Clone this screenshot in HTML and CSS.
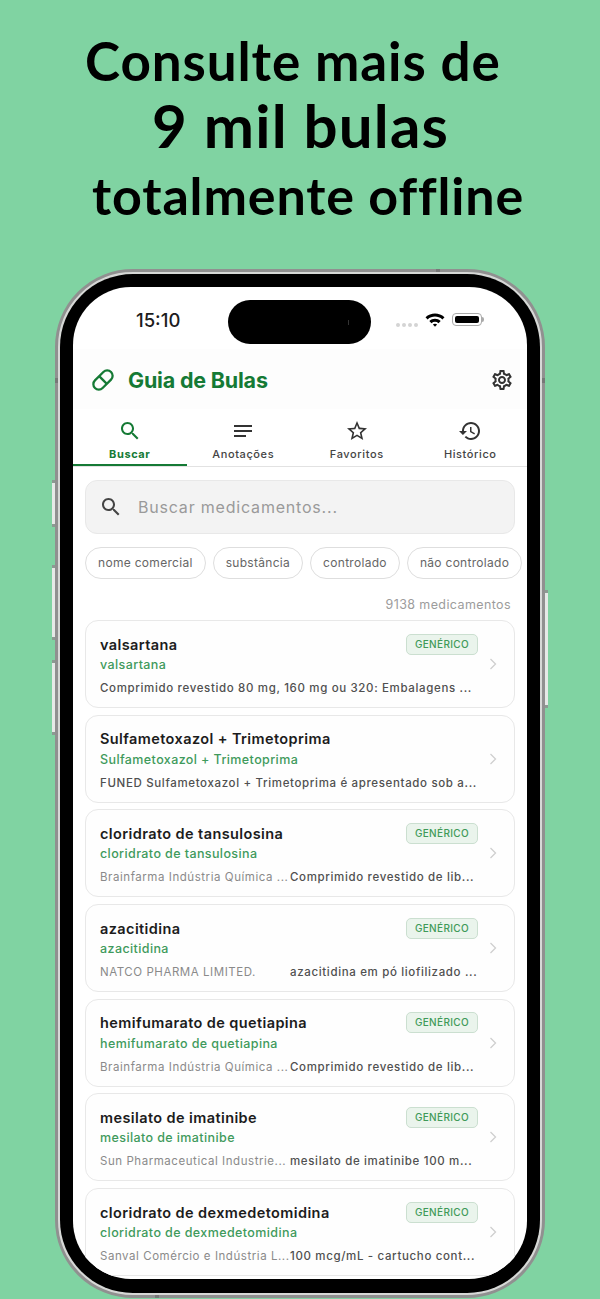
FILE: index.html
```html
<!DOCTYPE html>
<html lang="pt">
<head>
  <meta charset="UTF-8">
  <title>Guia de Bulas</title>
  <link rel="stylesheet" href="styles.css">
</head>
<body>
  <div class="headline">
    <p class="line-one">Consulte mais de</p>
    <p class="line-two">9 mil bulas</p>
    <p class="line-three">totalmente offline</p>
  </div>

  <div class="phone">
    <span class="side-btn mute"></span>
    <span class="side-btn vol-up"></span>
    <span class="side-btn vol-down"></span>
    <span class="side-btn power"></span>
    <span class="ant ant-top"></span>
    <span class="ant ant-bottom"></span>
    <span class="ant ant-left"></span>
    <span class="ant ant-right"></span>
    <div class="bezel">
      <div class="screen">
        <div class="island"><i></i></div>

        <div class="status">
          <span class="time">15:10</span>
          <div class="status-icons">
            <span class="signal"><i></i><i></i><i></i><i></i></span>
            <svg class="wifi" width="20" height="15" viewBox="0 0 20 15">
              <path d="M0.5 5.2C5.8 0.2 14.2 0.2 19.5 5.2L17.4 7.4C13.2 3.6 6.8 3.6 2.6 7.4Z" fill="#000"/>
              <path d="M4.3 9C7.6 6 12.4 6 15.7 9L13.5 11.2C11.4 9.4 8.6 9.4 6.5 11.2Z" fill="#000"/>
              <path d="M7.9 12.6C9.1 11.6 10.9 11.6 12.1 12.6L10 14.8Z" fill="#000"/>
            </svg>
            <span class="battery"><i></i></span>
          </div>
        </div>

        <header class="appbar">
          <div class="brand">
            <svg width="26" height="26" viewBox="0 0 24 24" fill="none" stroke="#157a35" stroke-width="2.1">
              <g transform="rotate(-45 12 12)">
                <rect x="1.5" y="7" width="21" height="10" rx="5"/>
                <path d="M12 7V17"/>
              </g>
            </svg>
            <h1>Guia de Bulas</h1>
          </div>
          <svg class="gear" width="24" height="24" viewBox="0 0 24 24" fill="#333">
            <path d="M19.43 12.98c.04-.32.07-.64.07-.98 0-.34-.03-.66-.07-.98l2.11-1.65c.19-.15.24-.42.12-.64l-2-3.46c-.09-.16-.26-.25-.44-.25-.06 0-.12.01-.17.03l-2.49 1c-.52-.4-1.08-.73-1.69-.98l-.38-2.65C14.46 2.18 14.25 2 14 2h-4c-.25 0-.46.18-.49.42l-.38 2.65c-.61.25-1.17.59-1.69.98l-2.49-1c-.06-.02-.12-.03-.18-.03-.17 0-.34.09-.43.25l-2 3.46c-.13.22-.07.49.12.64l2.11 1.65c-.04.32-.07.65-.07.98 0 .33.03.66.07.98l-2.11 1.65c-.19.15-.24.42-.12.64l2 3.46c.09.16.26.25.44.25.06 0 .12-.01.17-.03l2.49-1c.52.4 1.08.73 1.69.98l.38 2.65c.03.24.24.42.49.42h4c.25 0 .46-.18.49-.42l.38-2.65c.61-.25 1.17-.59 1.69-.98l2.49 1c.06.02.12.03.18.03.17 0 .34-.09.43-.25l2-3.46c.12-.22.07-.49-.12-.64l-2.11-1.65zm-1.98-1.71c.04.31.05.52.05.73 0 .21-.02.43-.05.73l-.14 1.13.89.7 1.08.84-.7 1.21-1.27-.51-1.04-.42-.9.68c-.43.32-.84.56-1.25.73l-1.06.43-.16 1.13-.2 1.35h-1.4l-.19-1.35-.16-1.13-1.06-.43c-.43-.18-.83-.41-1.23-.71l-.91-.7-1.06.43-1.27.51-.7-1.21 1.08-.84.89-.7-.14-1.13c-.03-.31-.05-.54-.05-.74s.02-.43.05-.73l.14-1.13-.89-.7-1.08-.84.7-1.21 1.27.51 1.04.42.9-.68c.43-.32.84-.56 1.25-.73l1.06-.43.16-1.13.2-1.35h1.39l.19 1.35.16 1.13 1.06.43c.43.18.83.41 1.23.71l.91.7 1.06-.43 1.27-.51.7 1.21-1.07.85-.89.7.14 1.13zM12 8c-2.21 0-4 1.79-4 4s1.79 4 4 4 4-1.79 4-4-1.79-4-4-4zm0 6c-1.1 0-2-.9-2-2s.9-2 2-2 2 .9 2 2-.9 2-2 2z"/>
          </svg>
        </header>

        <nav class="tabs">
          <a class="tab active">
            <svg width="24" height="24" viewBox="0 0 24 24" fill="#157a35"><path d="M15.5 14h-.79l-.28-.27C15.41 12.59 16 11.11 16 9.5 16 5.91 13.09 3 9.5 3S3 5.91 3 9.5 5.91 16 9.5 16c1.61 0 3.09-.59 4.23-1.57l.27.28v.79l5 4.99L20.49 19l-4.99-5zm-6 0C7.01 14 5 11.99 5 9.5S7.01 5 9.5 5 14 7.01 14 9.5 11.99 14 9.5 14z"/></svg>
            <span>Buscar</span>
          </a>
          <a class="tab">
            <svg width="24" height="24" viewBox="0 0 24 24" fill="#333"><path d="M3 18h12v-2H3v2zM3 6v2h18V6H3zm0 7h18v-2H3v2z"/></svg>
            <span>Anotações</span>
          </a>
          <a class="tab">
            <svg width="24" height="24" viewBox="0 0 24 24" fill="#333"><path d="M22 9.24l-7.19-.62L12 2 9.19 8.63 2 9.24l5.46 4.73L5.82 21 12 17.27 18.18 21l-1.63-7.03L22 9.24zM12 15.4l-3.76 2.27 1-4.28-3.32-2.88 4.38-.38L12 6.1l1.71 4.04 4.38.38-3.32 2.88 1 4.28L12 15.4z"/></svg>
            <span>Favoritos</span>
          </a>
          <a class="tab">
            <svg width="24" height="24" viewBox="0 0 24 24" fill="#333"><path d="M13 3c-4.97 0-9 4.03-9 9H1l3.89 3.89.07.14L9 12H6c0-3.87 3.13-7 7-7s7 3.13 7 7-3.13 7-7 7c-1.93 0-3.68-.79-4.94-2.06l-1.42 1.42C8.27 19.99 10.51 21 13 21c4.97 0 9-4.03 9-9s-4.03-9-9-9zm-1 5v5l4.28 2.54.72-1.21-3.5-2.08V8H12z"/></svg>
            <span>Histórico</span>
          </a>
        </nav>

        <div class="content">
          <div class="search">
            <svg width="24" height="24" viewBox="0 0 24 24" fill="#444"><path d="M15.5 14h-.79l-.28-.27C15.41 12.59 16 11.11 16 9.5 16 5.91 13.09 3 9.5 3S3 5.91 3 9.5 5.91 16 9.5 16c1.61 0 3.09-.59 4.23-1.57l.27.28v.79l5 4.99L20.49 19l-4.99-5zm-6 0C7.01 14 5 11.99 5 9.5S7.01 5 9.5 5 14 7.01 14 9.5 11.99 14 9.5 14z"/></svg>
            <span>Buscar medicamentos...</span>
          </div>

          <div class="chips">
            <span class="chip">nome comercial</span>
            <span class="chip">substância</span>
            <span class="chip">controlado</span>
            <span class="chip">não controlado</span>
          </div>

          <p class="count">9138 medicamentos</p>

          <div class="list">
            <article class="card">
              <div class="card-top"><h2>valsartana</h2><span class="badge">GENÉRICO</span></div>
              <p class="subst">valsartana</p>
              <div class="card-info"><span class="desc">Comprimido revestido 80 mg, 160 mg ou 320: Embalagens ...</span></div>
              <svg class="chev" width="8" height="12" viewBox="0 0 8 12" fill="none" stroke="#cfcfcf" stroke-width="1.3"><path d="M1.5 1L6.5 6L1.5 11"/></svg>
            </article>
            <article class="card">
              <div class="card-top"><h2>Sulfametoxazol + Trimetoprima</h2></div>
              <p class="subst">Sulfametoxazol + Trimetoprima</p>
              <div class="card-info"><span class="desc">FUNED Sulfametoxazol + Trimetoprima é apresentado sob a...</span></div>
              <svg class="chev" width="8" height="12" viewBox="0 0 8 12" fill="none" stroke="#cfcfcf" stroke-width="1.3"><path d="M1.5 1L6.5 6L1.5 11"/></svg>
            </article>
            <article class="card">
              <div class="card-top"><h2>cloridrato de tansulosina</h2><span class="badge">GENÉRICO</span></div>
              <p class="subst">cloridrato de tansulosina</p>
              <div class="card-info"><span class="lab">Brainfarma Indústria Química ...</span><span class="desc">Comprimido revestido de lib...</span></div>
              <svg class="chev" width="8" height="12" viewBox="0 0 8 12" fill="none" stroke="#cfcfcf" stroke-width="1.3"><path d="M1.5 1L6.5 6L1.5 11"/></svg>
            </article>
            <article class="card">
              <div class="card-top"><h2>azacitidina</h2><span class="badge">GENÉRICO</span></div>
              <p class="subst">azacitidina</p>
              <div class="card-info"><span class="lab">NATCO PHARMA LIMITED.</span><span class="desc">azacitidina em pó liofilizado ...</span></div>
              <svg class="chev" width="8" height="12" viewBox="0 0 8 12" fill="none" stroke="#cfcfcf" stroke-width="1.3"><path d="M1.5 1L6.5 6L1.5 11"/></svg>
            </article>
            <article class="card">
              <div class="card-top"><h2>hemifumarato de quetiapina</h2><span class="badge">GENÉRICO</span></div>
              <p class="subst">hemifumarato de quetiapina</p>
              <div class="card-info"><span class="lab">Brainfarma Indústria Química ...</span><span class="desc">Comprimido revestido de lib...</span></div>
              <svg class="chev" width="8" height="12" viewBox="0 0 8 12" fill="none" stroke="#cfcfcf" stroke-width="1.3"><path d="M1.5 1L6.5 6L1.5 11"/></svg>
            </article>
            <article class="card">
              <div class="card-top"><h2>mesilato de imatinibe</h2><span class="badge">GENÉRICO</span></div>
              <p class="subst">mesilato de imatinibe</p>
              <div class="card-info"><span class="lab">Sun Pharmaceutical Industrie...</span><span class="desc">mesilato de imatinibe 100 m...</span></div>
              <svg class="chev" width="8" height="12" viewBox="0 0 8 12" fill="none" stroke="#cfcfcf" stroke-width="1.3"><path d="M1.5 1L6.5 6L1.5 11"/></svg>
            </article>
            <article class="card">
              <div class="card-top"><h2>cloridrato de dexmedetomidina</h2><span class="badge">GENÉRICO</span></div>
              <p class="subst">cloridrato de dexmedetomidina</p>
              <div class="card-info"><span class="lab">Sanval Comércio e Indústria L...</span><span class="desc">100 mcg/mL - cartucho cont...</span></div>
              <svg class="chev" width="8" height="12" viewBox="0 0 8 12" fill="none" stroke="#cfcfcf" stroke-width="1.3"><path d="M1.5 1L6.5 6L1.5 11"/></svg>
            </article>
          </div>
        </div>
      </div>
    </div>
  </div>
</body>
</html>
```

FILE: styles.css
```css
html, body {
  margin: 0;
  height: 1299px;
  overflow: hidden;
}

body {
  background-color: #80d3a2;
  font-family: Inter, "Liberation Sans", sans-serif;
  color: #1c1c1c;
}

p, h1, h2 {
  margin: 0;
}

/* headline over the phone */
.headline {
  height: 269px;
  color: #000;
  font-family: Lato, "Open Sans", sans-serif;
  font-weight: 700;
  white-space: nowrap;
}

.line-one {
  padding: 30px 0 0 85px;
  font-size: 53px;
  letter-spacing: 0.9px;
  line-height: 62px;
}

.line-two {
  padding-left: 152px;
  font-size: 60px;
  letter-spacing: 1.2px;
  line-height: 66px;
}

.line-three {
  margin-top: 6px;
  padding-left: 92px;
  font-size: 52px;
  letter-spacing: 0.85px;
  line-height: 62px;
}

/* phone frame */
.phone {
  position: relative;
  width: 490px;
  height: 1029px;
  margin-left: 55px;
  box-sizing: border-box;
  border: 3px solid #909090;
  border-radius: 78px;
  background: #d6d8d6;
  padding: 2px;
}

.bezel {
  height: 100%;
  box-sizing: border-box;
  background: #000;
  border-radius: 73px;
  padding: 13px 13px 14px;
}

.screen {
  position: relative;
  height: 100%;
  background: #fff;
  border-radius: 58px;
  overflow: hidden;
}

.side-btn {
  position: absolute;
  width: 3px;
  background: #e6e9e7;
  border-top: 3px solid #8d9a93;
  border-bottom: 3px solid #8d9a93;
  box-sizing: border-box;
}

.mute { left: -6px; top: 208px; height: 47px; }
.vol-up { left: -6px; top: 293px; height: 75px; }
.vol-down { left: -6px; top: 388px; height: 75px; }
.power { right: -6px; top: 318px; height: 118px; }

/* antenna marks on the rim */
.ant {
  position: absolute;
  background: #777;
}

.ant-top { left: 378px; top: -3px; width: 4px; height: 3px; }
.ant-bottom { left: 97px; bottom: -3px; width: 4px; height: 3px; }
.ant-left { left: -3px; top: 106px; width: 3px; height: 5px; }
.ant-right { right: -3px; top: 106px; width: 3px; height: 5px; }

.island {
  position: absolute;
  left: 155px;
  top: 13px;
  width: 143px;
  height: 44px;
  background: #000;
  border-radius: 22px;
}

.island i {
  position: absolute;
  right: 22px;
  top: 20px;
  width: 1px;
  height: 5px;
  background: #333;
}

/* status bar */
.status {
  display: flex;
  justify-content: space-between;
  align-items: center;
  height: 62px;
  box-sizing: border-box;
  padding: 4px 45px 0 63px;
}

.time {
  font-size: 18.5px;
  font-weight: 500;
}

.status-icons {
  display: flex;
  align-items: center;
  gap: 7px;
  margin-top: -2px;
}

.signal {
  display: flex;
  gap: 2px;
  margin-top: 11px;
}

.signal i {
  width: 4px;
  height: 4px;
  border-radius: 50%;
  background: #d4d4d4;
}

.battery {
  position: relative;
  display: block;
  width: 30px;
  height: 13px;
  box-sizing: border-box;
  padding: 2px;
  border: 1px solid #aaa;
  border-radius: 4px;
}

.battery::after {
  content: "";
  position: absolute;
  right: -3px;
  top: 3px;
  width: 2px;
  height: 5px;
  background: #aaa;
  border-radius: 0 2px 2px 0;
}

.battery i {
  display: block;
  height: 100%;
  background: #000;
  border-radius: 2px;
}

/* app bar */
.appbar {
  display: flex;
  justify-content: space-between;
  align-items: center;
  height: 60px;
  box-sizing: border-box;
  padding: 2px 13px 0 17px;
  background: #fdfdfd;
}

.brand {
  display: flex;
  align-items: center;
  gap: 12px;
}

.brand h1 {
  font-size: 21.5px;
  font-weight: 700;
  color: #157a35;
  letter-spacing: -0.2px;
}

/* tabs */
.tabs {
  display: grid;
  grid-template-columns: repeat(4, 1fr);
  height: 58px;
  border-bottom: 1px solid #e2e2e2;
  box-sizing: border-box;
}

.tab {
  display: flex;
  flex-direction: column;
  align-items: center;
  padding-top: 10px;
  gap: 4px;
  box-sizing: border-box;
  font-size: 11px;
  font-weight: 500;
  letter-spacing: 0.6px;
  color: #444;
}

.tab.active {
  color: #157a35;
  font-weight: 700;
  border-bottom: 2px solid #157a35;
}

/* search and filters */
.content {
  padding: 13px 0 0 12px;
}

.search {
  display: flex;
  align-items: center;
  gap: 15px;
  width: 430px;
  height: 54px;
  box-sizing: border-box;
  padding-left: 13px;
  background: #f3f3f3;
  border: 1px solid #e8e8e8;
  border-radius: 12px;
  font-size: 16px;
  letter-spacing: 0.8px;
  color: #9a9a9a;
}

.chips {
  display: flex;
  gap: 7px;
  margin-top: 13px;
  white-space: nowrap;
}

.chip {
  padding: 0 12px;
  height: 30px;
  line-height: 30px;
  border: 1px solid #dedede;
  border-radius: 16px;
  font-size: 12px;
  letter-spacing: 0.3px;
  color: #666;
}

.count {
  width: 426px;
  margin-top: 18px;
  text-align: right;
  font-size: 12.5px;
  letter-spacing: 0.4px;
  color: #9c9c9c;
}

/* result cards */
.list {
  display: flex;
  flex-direction: column;
  gap: 6.7px;
  margin-top: 8px;
}

.card {
  position: relative;
  width: 430px;
  height: 88px;
  box-sizing: border-box;
  padding: 13px 14px 0;
  border: 1px solid #e8e8e8;
  border-radius: 13px;
  background: #fefefe;
}

.card-top {
  display: flex;
  justify-content: space-between;
  align-items: center;
  width: 378px;
  height: 20px;
}

.card h2 {
  font-size: 14.5px;
  font-weight: 600;
  letter-spacing: 0.4px;
  color: #1c1c1c;
}

.badge {
  padding: 0 8px;
  height: 19px;
  line-height: 19px;
  background: #eaf4ec;
  border: 1px solid #cbdfd0;
  border-radius: 5px;
  font-size: 10px;
  font-weight: 500;
  letter-spacing: 0.35px;
  color: #3f9a58;
}

.subst {
  margin-top: 3px;
  font-size: 12.5px;
  font-weight: 500;
  letter-spacing: 0.4px;
  color: #3f9a5c;
}

.card-info {
  display: flex;
  margin-top: 9px;
  font-size: 11.5px;
  letter-spacing: 0.55px;
  white-space: nowrap;
}

.lab {
  flex: none;
  width: 190px;
  color: #8a8a8a;
}

.desc {
  font-weight: 500;
  letter-spacing: 0.65px;
  color: #505050;
}

.chev {
  position: absolute;
  right: 17px;
  top: 37px;
}
```
